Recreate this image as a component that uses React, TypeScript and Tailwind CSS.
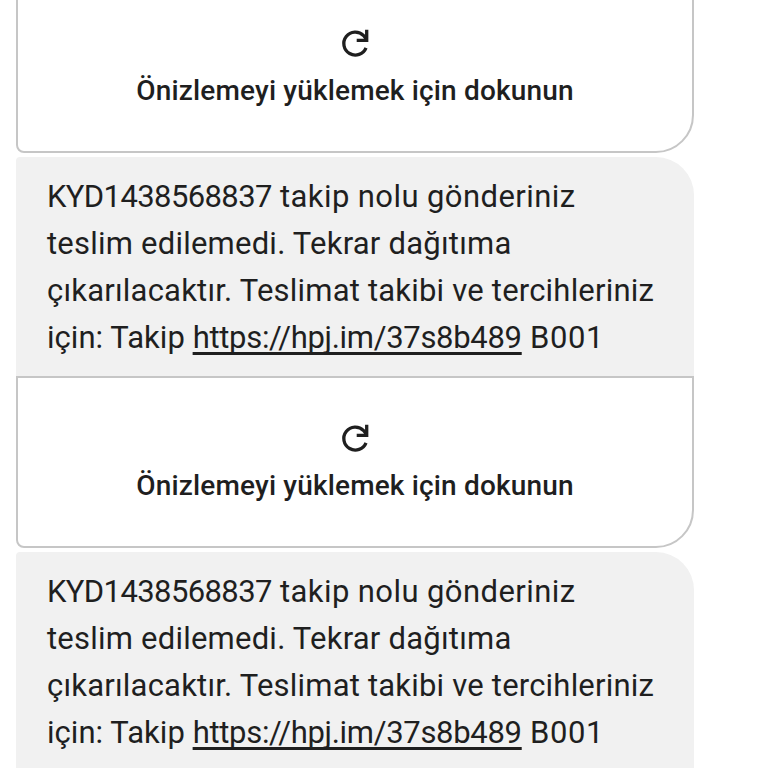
import React from 'react';

const ReloadIcon = () => (
  <svg width="32" height="32" viewBox="0 0 32 32" fill="none" stroke="#1f1f1f" strokeWidth="3.3">
    <path d="M27 20.8A11.5 11.5 0 1 1 24.6 8.6L27.2 12" />
    <path d="M17.7 13.4H27.7V2.8" />
  </svg>
);

const PreviewCard = () => (
  <div className="h-[172px] shrink-0 flex flex-col items-center bg-white border-2 border-[#c6c6c6] rounded-bl-[8px] rounded-br-[38px] pt-[44px]">
    <ReloadIcon />
    <p className="mt-[14px] text-[28px] leading-[36px] font-medium tracking-[0.16px] whitespace-nowrap">
      Önizlemeyi yüklemek için dokunun
    </p>
  </div>
);

const MessageBubble = () => (
  <div className="mt-1 h-[219px] shrink-0 bg-[#f1f1f1] rounded-tl-[4px] rounded-tr-[38px] pl-[31px] pt-4 text-[31px] leading-[47px] whitespace-nowrap">
    <p>
      <span className="tracking-[-0.6px]">KYD1438568837</span>
      <span className="tracking-[0.42px]"> takip nolu gönderiniz</span>
    </p>
    <p className="tracking-[0.22px]">teslim edilemedi. Tekrar dağıtıma</p>
    <p className="tracking-[0.2px]">çıkarılacaktır. Teslimat takibi ve tercihleriniz</p>
    <p>
      <span className="tracking-[0.05px]">için: Takip </span>
      <a className="tracking-[-0.3px] underline decoration-[2.5px] underline-offset-[4px] [text-decoration-skip-ink:none]">https://hpj.im/37s8b489</a>
      <span className="tracking-[0.6px]"> B001</span>
    </p>
  </div>
);

const App: React.FC = () => (
  <div className="w-[768px] h-[768px] overflow-hidden bg-white text-[#1f1f1f] font-['Roboto',sans-serif]">
    <div className="ml-4 -mt-[19px] w-[678px] flex flex-col">
      <PreviewCard />
      <MessageBubble />
      <PreviewCard />
      <MessageBubble />
    </div>
  </div>
);

export default App;
